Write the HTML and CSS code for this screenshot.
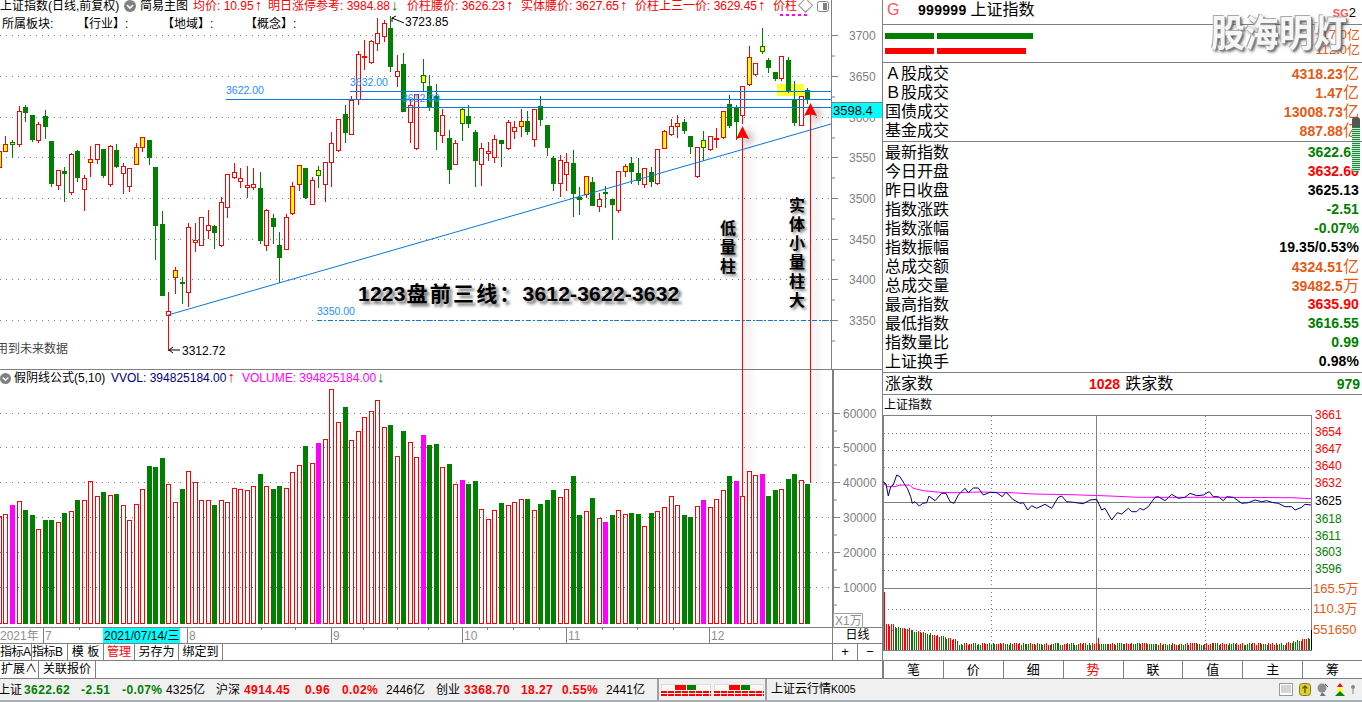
FILE: index.html
```html
<!doctype html>
<html>
<head>
<meta charset="utf-8">
<meta name="viewport" content="width=device-width">
<link rel="stylesheet" href="styles.css">
</head>
<body>
<div class="app">
<div class="work">
  <div class="left">
    <div class="price-pane">
      <svg id="price" class="plot" width="882" height="369" viewBox="0 0 882 369"></svg>
      <div class="legend legend1">
        <span>上证指数(日线,前复权)</span>
        <svg class="chev" width="12" height="12" viewBox="0 0 12 12"><circle cx="6" cy="6" r="6" fill="#808080"/><path d="M3 5l3 3 3-3" fill="none" stroke="#fff" stroke-width="1.6"/></svg>
        <span>简易主图</span>
        <span class="red">均价: 10.95<i class="up">↑</i></span>
        <span class="red">明日涨停参考: 3984.88<i class="up dn">↓</i></span>
        <span class="red">价柱腰价: 3626.23<i class="up">↑</i></span>
        <span class="red">实体腰价: 3627.65<i class="up">↑</i></span>
        <span class="red">价柱上三一价: 3629.45<i class="up">↑</i></span>
        <span class="red">价柱</span>
        <span class="dia">◇</span>
        <svg width="12" height="11" viewBox="0 0 12 11"><rect x=".5" y=".5" width="11" height="10" rx="2" fill="#fff" stroke="#808080"/><rect x="6" y="2" width="4" height="7" fill="#808080"/></svg>
      </div>
      <div class="magdots"></div>
      <div class="legend legend2">
        <span>所属板块:</span><span>【行业】:</span><span>【地域】:</span><span>【概念】:</span>
      </div>
      <div class="nofuture">用到未来数据</div>
      <div class="lasttag">3598.4</div>
    </div>
    <div class="vol-pane">
      <svg id="vol" class="plot" width="882" height="257" viewBox="0 370 882 257"></svg>
      <div class="legend legend3">
        <svg class="chev" width="11" height="11" viewBox="0 0 12 12"><circle cx="6" cy="6" r="6" fill="#808080"/><path d="M3 5l3 3 3-3" fill="none" stroke="#fff" stroke-width="1.6"/></svg>
        <span>假阴线公式(5,10)</span>
        <span class="navy">VVOL: 394825184.00<i class="up red">↑</i></span>
        <span class="mag">VOLUME: 394825184.00<i class="up dn">↓</i></span>
      </div>
      <div class="unit">X1万</div>
    </div>
    <div class="date-row">
      <svg id="dates" width="832" height="15" viewBox="0 628 832 15"></svg>
      <div class="period">日线</div>
    </div>
    <div class="tool-row">
      <div class="tools">
        <span class="w32 tight">指标A</span><span class="w36 tight">指标B</span><span class="w36">模 板</span><span class="w31 red">管理</span><span class="w44">另存为</span><span class="w44">绑定到</span>
      </div>
      <div class="zoomer"><span>+</span><span>−</span></div>
    </div>
    <div class="ext-row">
      <span class="w39">扩展∧</span><span class="w57">关联报价</span>
    </div>
    <svg id="marks" class="marks" width="882" height="627" viewBox="0 0 882 627"></svg>
    <div class="note note1">低量柱</div>
    <div class="note note2">实体小量柱大</div>
    <div class="headline">1223<span>盘前三线：</span>3612-3622-3632</div>
  </div>

  <div class="quote">
    <div class="q-head">
      <span class="g">G</span><b class="code">999999</b><span>上证指数</span>
      <span class="sg"><b>SG</b>2</span>
    </div>
    <div class="q-bars">
      <div class="barline"><i class="bar green w49"></i><i class="bar green w96"></i><span class="org">117.0亿</span></div>
      <div class="barline"><i class="bar redb w49"></i><i class="bar redb w89"></i><span class="org">112.0亿</span></div>
    </div>
    <div class="q-block">
      <div class="row"><span>Ａ股成交</span><span class="org"><b>4318.23</b>亿</span></div>
      <div class="row"><span>Ｂ股成交</span><span class="org"><b>1.47</b>亿</span></div>
      <div class="row"><span>国债成交</span><span class="org"><b>13008.73</b>亿</span></div>
      <div class="row"><span>基金成交</span><span class="org"><b>887.88</b>亿</span></div>
    </div>
    <div class="q-block">
      <div class="row"><span>最新指数</span><b class="grn">3622.62</b></div>
      <div class="row"><span>今日开盘</span><b class="red">3632.60</b></div>
      <div class="row"><span>昨日收盘</span><b>3625.13</b></div>
      <div class="row"><span>指数涨跌</span><b class="grn">-2.51</b></div>
      <div class="row"><span>指数涨幅</span><b class="grn">-0.07%</b></div>
      <div class="row"><span>指数振幅</span><b>19.35/0.53%</b></div>
      <div class="row"><span>总成交额</span><span class="org"><b>4324.51</b>亿</span></div>
      <div class="row"><span>总成交量</span><span class="org"><b>39482.5</b>万</span></div>
      <div class="row"><span>最高指数</span><b class="red">3635.90</b></div>
      <div class="row"><span>最低指数</span><b class="grn">3616.55</b></div>
      <div class="row"><span>指数量比</span><b class="grn">0.99</b></div>
      <div class="row"><span>上证换手</span><b>0.98%</b></div>
    </div>
    <div class="q-updown"><span class="lab">涨家数</span><b class="red">1028</b><span class="lab2">跌家数</span><b class="grn end">979</b></div>
    <div class="q-title">上证指数</div>
    <svg id="intra" width="479" height="245" viewBox="883 415 479 245"></svg>
    <div class="tabs">
      <span>笔</span><span>价</span><span>细</span><span class="red">势</span><span>联</span><span>值</span><span>主</span><span>筹</span>
    </div>
    <div class="mark">股海明灯</div>
    <div class="scroller"></div>
  </div>
</div>

<div class="status">
  <div class="idx">
    <span class="cut">上证</span><b class="grn">3622.62</b><b class="grn">-2.51</b><b class="grn">-0.07%</b><span>4325亿</span>
    <span>沪深</span><b class="red">4914.45</b><b class="red">0.96</b><b class="red">0.02%</b><span>2446亿</span>
    <span>创业</span><b class="red">3368.70</b><b class="red">18.27</b><b class="red">0.55%</b><span>2441亿</span>
  </div>
  <div class="minis">
    <div class="mini"><div class="mini-top"><i class="m1"></i><i class="m2"></i></div><div class="mini-dash"></div><div class="mini-dash"></div></div>
    <div class="mini"><div class="mini-top mini-b"><i class="m1"></i><i class="m2"></i></div><div class="mini-dash"></div><div class="mini-dash"></div></div>
  </div>
  <div class="cloud">上证云行情<span>K005</span></div>
  <div class="tray">
    <svg width="14" height="13" viewBox="0 0 14 13"><rect x=".5" y=".5" width="13" height="12" fill="#fff" stroke="#999"/><path d="M2 3h10M2 5h10M2 7h10M2 9h10" stroke="#aaa"/></svg>
    <svg width="12" height="13" viewBox="0 0 12 13"><rect x=".5" y=".5" width="11" height="12" rx="3" fill="#e0d030" stroke="#807820"/><path d="M6 3v7M3.5 5.5L6 3l2.500 2.500" fill="none" stroke="#605a10" stroke-width="1.400"/></svg>
    <svg width="12" height="13" viewBox="0 0 12 13"><circle cx="5" cy="5" r="4.500" fill="#8c9090"/><path d="M5 9l-2 4h6z" fill="#707474"/><path d="M8 1l3 3" stroke="#555"/></svg>
    <svg width="10" height="13" viewBox="0 0 10 13"><path d="M5 0l3 4H2z" fill="#f00"/><path d="M5 4l4 4.500H1z" fill="#ff0"/><path d="M5 8l5 5H0z" fill="#080"/></svg>
    <svg width="4" height="9" viewBox="0 0 4 9"><circle cx="2" cy="2" r="2" fill="#888"/><path d="M2 3v6" stroke="#888"/></svg>
  </div>
</div>
</div>
<script src="script.js"></script>
</body>
</html>
```

FILE: styles.css
```css
html,body{margin:0; padding:0; background:#fff}
body{font:12px/14px "Liberation Sans","Noto Sans CJK SC",sans-serif; color:#000; overflow:hidden}
*{box-sizing:border-box}
i{font-style:normal}
svg{display:block}
.app{width:1362px; height:702px; display:flex; flex-direction:column; overflow:hidden}
.work{height:679px; display:flex; border-bottom:1px solid #808080}

.red{color:#f00}
.grn{color:#008000}
.org{color:#e65a14}
.navy{color:#000080}
.mag{color:#f0f}
.dn{color:#008000}
.up{font-size:15px; line-height:10px; font-weight:700; margin-left:1px}

.left{width:883px; position:relative; border-right:1px solid #808080; display:flex; flex-direction:column}
.price-pane{height:370px; position:relative; border-bottom:1px solid #808080}
.vol-pane{height:257px; position:relative}
.plot{position:absolute; left:0; top:0}

.legend{position:absolute; left:0; display:grid; align-items:center; white-space:nowrap}
.legend1{top:0; height:12px; line-height:12px; width:882px; grid-template-columns:124px 16px 53px 75px 139px 114px 114px 138px 25px 19px 1fr}
.legend2{top:17px; height:14px; grid-template-columns:75px 85px 83px 60px; padding-left:2px}
.legend3{top:1px; height:14px; grid-template-columns:14px 97px 131px 150px}
.dia{font-size:15px; color:#555}
.magdots{position:absolute; left:780px; top:14px; width:30px; height:2px; background:repeating-linear-gradient(90deg,#f0f 0 3px,transparent 3px 6px)}
.nofuture{position:absolute; left:-4px; top:342px; color:#444}
.lasttag{position:absolute; left:832px; top:102px; width:50px; height:16px; background:#0ff; border-top:1px solid #808080; font-size:13px; line-height:15px; padding-left:1px}
.unit{position:absolute; left:833px; top:243px; width:30px; height:15px; border:1px solid #a0a0a0; border-bottom:0; color:#909090; line-height:14px; padding-left:1px}

.date-row{height:16px; display:flex; border-top:1px solid #808080; border-bottom:0}
.period{width:50px; text-align:center; line-height:15px; border-left:1px solid #808080}
.tool-row{height:17px; display:flex; border-top:1px solid #808080}
.tools{width:832px; display:flex}
.tools span,.ext-row span{display:block; border-right:1px solid #808080; text-align:center; line-height:16px; white-space:nowrap}
.tools .tight{letter-spacing:-.5px; text-align:left}
.zoomer{width:50px; display:flex; border-left:1px solid #808080}
.zoomer span{flex:1; text-align:center; line-height:15px; font-size:13px}
.zoomer span:first-child{border-right:1px solid #808080}
.ext-row{height:18px; display:flex; border-top:1px solid #808080}
.w31{width:31px}
.w32{width:32px}
.w36{width:36px}
.w39{width:39px}
.w44{width:44px}
.w57{width:57px}

.marks{position:absolute; left:0; top:0; pointer-events:none}
.arrows{filter:drop-shadow(5px 3px 4px rgba(0,0,0,.4))}
.note{position:absolute; writing-mode:vertical-rl; text-orientation:upright; font-size:16px; font-weight:700; line-height:17px; letter-spacing:3px; text-shadow:2px 2px 3px rgba(0,0,0,.55)}
.note1{left:718px; top:220px}
.note2{left:787px; top:197px}
.headline{position:absolute; left:358px; top:281px; font-size:21px; line-height:25px; font-weight:700; letter-spacing:.2px; white-space:nowrap; text-shadow:3px 3px 3px rgba(0,0,0,.55)}
.headline span{letter-spacing:2.2px; margin-left:1px}

.plot text,#intra text,#dates text{font:12px "Liberation Sans","Noto Sans CJK SC",sans-serif}
.grid{stroke:#808080; stroke-dasharray:1 5; fill:none}
.axis{stroke:#808080; fill:none}
.plot text.ax{fill:#808080}
.plot text.blue{fill:#1e90ff; font-size:10.5px}
.plot text.ink{fill:#000}
#intra text.ink,#dates text.ink{fill:#000}
#intra text.rd{fill:#f00}
#intra text.gr{fill:#008000}
#intra text.or{fill:#e65a14; font-size:13px}
#dates text.dim{fill:#909090}

.quote{width:479px; position:relative; display:flex; flex-direction:column}
.q-head{height:25px; display:flex; align-items:center; font-size:16px; padding:0 0 5px 4px; border-bottom:1px solid #808080}
.q-head .g{color:#f55; width:31px}
.code{font-size:14px; margin-right:4px; letter-spacing:.3px}
.sg{margin-left:auto; font-size:13px; padding:6px 6px 0 0}
.sg b{color:#f55; font-size:11px}
.q-bars{height:38px; padding:7px 2px 0; border-bottom:1px solid #808080}
.barline{display:flex; height:15px; align-items:flex-start; position:relative}
.bar{display:block; height:6px; margin-right:3px; margin-top:1px}
.green{background:#008000}
.redb{background:#f00}
.w49{width:49px}
.w96{width:96px}
.w89{width:89px}
.barline .org{position:absolute; right:0; top:-4px; font-size:13px}
.q-block{padding:1px 3px 1px 2px; border-bottom:1px solid #808080}
.row{height:19px; display:flex; justify-content:space-between; align-items:center; font-size:16px; line-height:19px; white-space:nowrap}
.row b{font-size:14px; letter-spacing:.1px}
.q-updown{height:22px; display:flex; align-items:center; font-size:16px; padding:0 2px; border-bottom:1px solid #808080}
.q-updown b{font-size:14px}
.lab{width:204px}
.lab2{margin-left:5px}
.end{margin-left:auto}
.q-title{height:20px; line-height:20px; padding-left:1px; font-size:12px}
#intra{overflow:visible}
.tabs{height:18px; display:flex; border-top:1px solid #808080}
.tabs span{flex:1; text-align:center; line-height:17px; border-left:1px solid #808080; font-size:13px}
.mark{position:absolute; left:328px; top:13px; font-size:34px; line-height:42px; font-weight:700; color:#f6f6f6; white-space:nowrap; transform:scaleY(1.1); text-shadow:-1px -1px 0 #aaa,1px 1px 0 #888,2px 2px 3px #444}
.scroller{position:absolute; left:469px; top:117px; width:8px; height:55px; border-radius:3px; background:linear-gradient(#555 0 10px,transparent 10px),repeating-linear-gradient(#1a8a3a 0 1px,#c8e8d0 1px 2px)}

.status{height:23px; background:#f0f0f0; display:flex; align-items:flex-start; white-space:nowrap; border-bottom:2px solid #a8b0b8}
.idx{display:grid; grid-template-columns:24px 57px 41px 44px 50px 28px 61px 37px 44px 50px 28px 57px 41px 44px 51px; height:21px; align-items:center; width:657px; letter-spacing:.1px}
.idx b{letter-spacing:.4px}
.cut{margin-left:-2px}
.minis{display:flex; width:108px; height:21px; padding:5px 0 0 2px; gap:3px; border-left:2px solid #a0a0a0}
.mini{width:50px}
.mini-top{height:6px; background:#f8f8f8; border:1px solid #ddd; border-width:1px 1px 0; display:flex; padding-left:13px}
.mini-b{padding-left:14px}
.mini-top .m1{width:11px; background:#f00}
.mini-top .m2{width:9px; background:#008000; margin-left:1px}
.mini-dash{height:2px; margin-top:1px; background:repeating-linear-gradient(90deg,#f00 0 6px,transparent 6px 7px)}
.cloud{width:514px; height:21px; line-height:21px; padding-left:4px; border-left:2px solid #a0a0a0}
.cloud span{font-size:10.5px}
.tray{display:flex; align-items:center; height:21px; gap:6px}
```

FILE: script.js
```js
// chart data read off the picture, y values are 3x screen pixels
var candles = ("y 453 453 500 500,y 408 432 453 453,z 420 425 433 472,r 318 333 431 437,g 315 322 335 362,g 345 345 417 422,"+
"r 367 372 419 426,g 330 348 378 414,g 423 423 549 558,r 511 511 554 567,g 502 514 518 603,r 458 462 576 582,"+
"g 450 453 531 543,r 526 535 566 630,y 438 478 485 528,r 433 433 478 490,g 447 447 525 531,r 435 438 551 558,"+
"g 432 450 498 501,r 490 499 520 579,r 505 505 559 573,y 430 441 491 491,y 411 411 441 453,g 420 420 471 492,"+
"g 501 501 675 777,g 633 672 885 885,r 876 933 945 1050,y 801 810 831 879,g 831 846 849 909,r 670 682 875 918,"+
"r 670 720 726 753,r 652 652 735 735,r 630 676 690 714,g 676 679 696 744,r 590 606 735 738,r 523 523 622 650,"+
"r 490 517 530 534,r 505 535 542 560,r 498 556 560 590,r 505 553 560 566,g 516 564 720 730,r 628 631 735 750,"+
"g 642 655 678 730,g 696 735 771 846,r 642 652 747 747,y 545 558 638 642,y 496 496 551 570,g 504 504 591 595,"+
"r 530 541 611 611,z 498 510 526 561,r 487 487 551 603,r 396 430 487 558,r 358 358 450 453,g 316 342 396 426,"+
"r 288 300 401 401,r 153 163 298 312,r 120 168 172 207,r 120 124 187 190,r 54 100 130 150,r 60 70 109 123,"+
"g 48 84 197 213,r 165 214 227 258,g 159 192 333 333,r 300 316 365 426,r 283 283 444 447,z 178 226 247 270,"+
"g 225 258 318 330,g 252 288 393 447,r 327 346 406 426,g 390 414 507 549,r 421 430 493 493,z 324 327 370 420,"+
"g 315 348 370 380,g 390 396 480 558,r 430 445 491 555,r 426 454 460 480,r 405 417 471 485,g 420 420 429 498,"+
"r 360 366 444 447,r 363 381 392 413,y 327 363 377 408,g 333 363 393 402,r 328 328 416 438,g 288 318 357 375,"+
"g 375 375 441 465,g 468 474 549 570,r 465 481 548 588,r 460 487 521 570,g 450 489 579 648,g 560 590 597 642,"+
"y 528 528 582 590,g 531 546 615 615,r 580 598 618 633,z 558 576 579 620,g 597 597 612 717,r 514 514 630 636,"+
"y 492 498 513 528,g 471 489 513 549,g 474 519 540 552,r 505 505 552 560,g 500 516 543 558,r 447 447 549 552,"+
"y 390 393 444 444,r 357 379 402 405,y 345 369 377 411,g 358 366 390 399,g 408 408 438 459,r 441 441 528 530,"+
"z 393 420 441 480,r 408 408 447 450,r 384 414 416 441,y 333 333 411 414,g 285 312 375 381,g 315 324 363 417,"+
"r 259 259 345 369,y 138 171 252 255,r 189 189 222 225,z 84 138 154 159,g 174 180 201 216,g 216 216 234 240,"+
"r 168 168 234 240,g 171 180 270 276,g 243 300 366 375,r 289 289 374 375,g 264 270 294 309").split(",");

var vols = ("r287 r283 m255 r244 g270 g285 r328 g300 g300 r307 g279 r274 g240 r241 r184 r229 g216 r226 g222 r256 "+
"r301 r253 r208 g138 g141 g114 r193 r247 g207 r154 r187 r241 r241 g255 r241 r247 r205 r208 r211 r199 g162 r199 "+
"g207 g198 r205 r157 r136 g78 r130 m69 r58 r-93 r7 g-39 r61 r34 r-9 r-27 r-60 r22 g15 r109 g33 r67 r112 m45 g75 g72 "+
"r142 g132 r193 m180 g192 g183 r268 r298 r271 g249 r256 r247 r238 g237 r271 g252 g240 g210 r232 r208 g168 g285 "+
"r274 g234 r295 m306 g285 r271 r283 g279 g282 r319 g279 r274 r262 r229 r256 g285 g291 r259 m240 r262 r238 r211 "+
"g168 m183 r229 r154 r166 m162 g228 g210 r208 g177 g162 r181 g192").split(" ");

function left(i){return Math.round(10+6.52*(i-2))}
function px(n){return Math.round(n/3)}
function gridline(y,x1,x2){return "<path class='grid' d='M"+x1+" "+(y+.5)+"H"+x2+"'/>"}
function label(x,y,s,c){return "<text x='"+x+"' y='"+y+"' class='"+c+"'>"+s+"</text>"}

function drawPrice(){
  var h=[], ys=[35,76,117,157,198,239,279,320], names=[3700,3650,3600,3550,3500,3450,3400,3350], i;
  for(i=0;i<ys.length;i++){
    h.push(gridline(ys[i],0,831));
    h.push("<path class='axis' d='M831 "+(ys[i]+.5)+"H838M831 "+(ys[i]+21)+"H835'/>");
    h.push(label(849,ys[i]+5,names[i],"ax"));
  }
  h.push("<path class='axis' d='M831.500 0V369'/>");
  h.push("<rect x='777' y='84' width='27' height='12' fill='#ffff33'/>");
  for(i=0;i<candles.length;i++){
    var c=candles[i].split(" "), x=left(i), col=(c[0]=="g"||c[0]=="z")?"#008000":"#f00";
    var hi=px(+c[1]), top=px(+c[2]), bot=px(+c[3]), lo=px(+c[4]);
    var fill=c[0]=="g"?"#008000":(c[0]=="r"?"#fff":"#ff0");
    h.push("<rect x='"+(x+2)+"' y='"+hi+"' width='1' height='"+(lo-hi+1)+"' fill='"+col+"' shape-rendering='crispEdges'/>");
    h.push("<rect x='"+(x+.5)+"' y='"+(top+.5)+"' width='4' height='"+Math.max(bot-top,1)+"' fill='"+fill+"' stroke='"+col+"' shape-rendering='crispEdges'/>");
  }
  h.push("<path d='M350 91.500H831M226 99.500H831M402 107.500H831' stroke='#0a78dc' fill='none'/>");
  h.push("<path d='M168 315L831 124' stroke='#0a78dc' fill='none'/>");
  h.push("<path d='M317 320.500H831' stroke='#0a78dc' stroke-dasharray='5 2 2 2' fill='none'/>");
  h.push(label(226,94,"3622.00","blue")+label(350,86,"3632.00","blue")+label(402,102,"3612.00","blue")+label(317,315,"3350.00","blue"));
  h.push("<path d='M404 23L392 18M392 18V22M392 18L396 16M169 350H180M169 350L173 347M169 350L173 353' stroke='#000' fill='none'/>");
  h.push(label(405,26,"3723.85","ink")+label(182,355,"3312.72","ink"));
  document.getElementById("price").innerHTML=h.join("");
}

function drawVol(){
  var h=[], ys=[413,447,482,517,552,587], names=[60000,50000,40000,30000,20000,10000], i;
  for(i=0;i<ys.length;i++){
    h.push(gridline(ys[i],0,831));
    h.push("<path class='axis' d='M833 "+(ys[i]+.5)+"H840M833 "+(ys[i]+18)+"H837'/>");
    h.push(label(843,ys[i]+5,names[i],"ax"));
  }
  h.push("<rect x='832' y='370' width='2' height='257' fill='#808080'/>");
  for(i=0;i<vols.length;i++){
    var t=vols[i].charAt(0), y=420+px(+vols[i].slice(1)), x=left(i);
    if(t=="r") h.push("<rect x='"+(x+.5)+"' y='"+(y+.5)+"' width='4' height='"+(623-y)+"' fill='none' stroke='#f00' shape-rendering='crispEdges'/>");
    else h.push("<rect x='"+x+"' y='"+y+"' width='5' height='"+(624-y)+"' fill='"+(t=="g"?"#008000":"#f0f")+"' shape-rendering='crispEdges'/>");
  }
  document.getElementById("vol").innerHTML=h.join("");
}

function drawDates(){
  var h=[], ticks=[79,261,295,363,397,428,487,513,539,602,637,673], cuts=[[43,"7"],[187,"8"],[331,"9"],[462,"10"],[566,"11"],[709,"12"]], i;
  h.push(label(0,640,"2021年","dim"));
  for(i=0;i<cuts.length;i++){
    h.push("<path class='axis' d='M"+(cuts[i][0]+.5)+" 628V643'/>");
    h.push(label(cuts[i][0]+2,640,cuts[i][1],"dim"));
  }
  for(i=0;i<ticks.length;i++) h.push("<path class='axis' d='M"+(ticks[i]+.5)+" 628V630'/>");
  h.push("<rect x='103' y='628' width='77' height='15' fill='#0ff'/>");
  h.push(label(104,640,"2021/07/14/三","ink"));
  document.getElementById("dates").innerHTML=h.join("");
}

function drawMarks(){
  document.getElementById("marks").innerHTML="<g class='arrows'>"+
    "<path d='M742.500 132V496M810.500 110V483' stroke='#f00' fill='none'/>"+
    "<path d='M742.500 126L736 139Q742.500 136 749 139ZM810.500 103L804 116Q810.500 113 817 116Z' fill='#f00'/></g>";
}

function zline(s,color){
  var p=s.split(" "), o=[];
  for(var i=0;i<p.length;i++){var a=p[i].split(","); o.push((880+a[0]/3).toFixed(1)+","+(460+a[1]/3).toFixed(1))}
  return "<polyline fill='none' stroke='"+color+"' points='"+o.join(" ")+"'/>";
}

function drawIntra(){
  var h=[], i, ys=[433,450,467,484,519,537,554,570,609,630];
  var red=[[3661,419,"rd"],[3654,436,"rd"],[3647,453,"rd"],[3640,470,"rd"],[3632,487,"rd"],[3625,505,"ink"],
    [3618,523,"gr"],[3611,540,"gr"],[3603,556,"gr"],[3596,573,"gr"]];
  h.push("<rect x='883.500' y='415.500' width='428' height='235' fill='none' stroke='#808080'/>");
  for(i=0;i<ys.length;i++) h.push("<path class='grid' d='M884 "+(ys[i]+.5)+"H1311' style='stroke-dasharray:1 3'/>");
  h.push("<path class='grid' d='M991.500 416V650M1205.500 416V650' style='stroke-dasharray:1 3'/>");
  h.push("<path class='axis' d='M1096.500 416V650M884 502.500H1311M884 588.500H1311'/>");
  h.push(zline("10,65 20,80 45,80 60,75 88,75 100,85 130,92 180,97 220,98 300,96 395,98 460,102 575,104 690,108 775,112 1000,112 1235,113 1293,116","#f0f"));
  h.push(zline("10,65 18,72 25,108 32,80 40,75 50,45 60,50 72,70 82,85 92,110 97,130 105,125 118,138 128,130 140,128 147,108 165,122 185,100 198,100 210,125 222,130 235,105 255,85 265,98 280,84 295,84 310,105 330,97 350,98 367,110 378,96 398,118 420,130 430,128 443,150 455,137 470,145 480,140 495,133 515,145 535,112 545,108 560,125 580,127 610,131 630,120 650,118 665,150 675,145 695,180 712,158 725,162 745,145 755,155 770,155 780,145 790,150 805,140 825,112 835,110 855,122 875,103 895,115 915,112 930,100 950,107 970,105 988,95 1000,110 1015,110 1030,122 1040,110 1060,112 1085,130 1105,128 1125,120 1145,125 1160,122 1180,128 1195,130 1215,140 1235,140 1245,150 1265,142 1275,133 1293,135","#000080"));
  for(i=0;i<240;i++){
    var n=Math.abs(Math.sin(i*12.9898)*43758)%1, v;
    if(i==0) v=58; else if(i==1) v=26;
    else if(i<42) v=25-(i*.42)+n*3;
    else if(i==120) v=12;
    else if(i>224) v=5+(i-224)*.4+n*2;
    else v=5+n*2.5;
    var c=(i==0||Math.sin(i*.7)+n-.5>0)?"#f00":"#008000";
    v=Math.round(v);
    h.push("<rect x='"+Math.round(884+i*1.78)+"' y='"+(650-v)+"' width='1' height='"+v+"' fill='"+c+"' shape-rendering='crispEdges'/>");
  }
  h.push("<path d='M1311.500 630V650' stroke='#000'/>");
  for(i=0;i<red.length;i++) h.push(label(1315,red[i][1],red[i][0],red[i][2]));
  h.push(label(1313,593,"165.5万","or")+label(1313,613,"110.3万","or")+label(1313,634,"551650","or"));
  document.getElementById("intra").innerHTML=h.join("");
}

drawPrice();drawVol();drawDates();drawMarks();drawIntra();
```
